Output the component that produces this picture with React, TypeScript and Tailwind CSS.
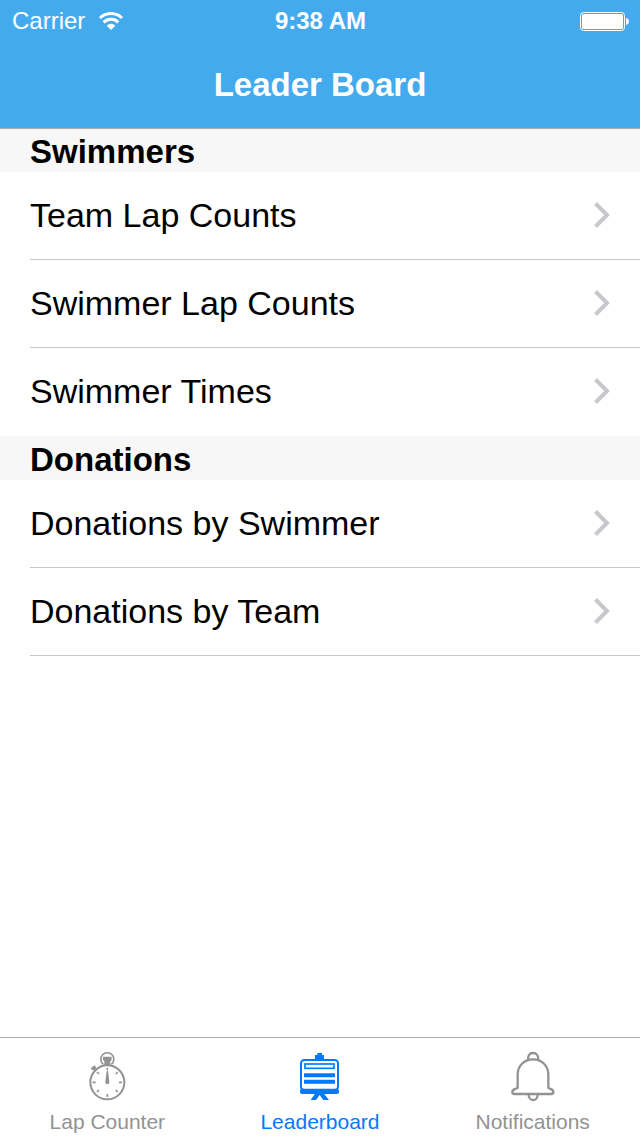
import { useState } from "react";

interface Section {
  title: string;
  items: string[];
}

const SECTIONS: Section[] = [
  { title: "Swimmers", items: ["Team Lap Counts", "Swimmer Lap Counts", "Swimmer Times"] },
  { title: "Donations", items: ["Donations by Swimmer", "Donations by Team"] },
];

const TABS = [
  { id: "laps", label: "Lap Counter", Icon: StopwatchIcon },
  { id: "leaderboard", label: "Leaderboard", Icon: BoardIcon },
  { id: "notifications", label: "Notifications", Icon: BellIcon },
];

function WifiIcon() {
  return (
    <svg className="w-6 h-[18px]" viewBox="0 0 72 54" fill="none" stroke="currentColor" strokeWidth="9" aria-hidden="true">
      <path d="M3 18 A47 47 0 0 1 69 18" />
      <path d="M14 31 A31 31 0 0 1 58 31" />
      <path d="M36 54 L23 41 A18 18 0 0 1 49 41 Z" fill="currentColor" stroke="none" />
    </svg>
  );
}

function BatteryIcon() {
  return (
    <svg className="w-[49px] h-[19px]" viewBox="0 0 49 19" fill="none" aria-hidden="true">
      <rect x="0.5" y="0.5" width="44" height="18" rx="3" stroke="currentColor" />
      <rect x="2" y="2" width="41" height="15" rx="1.5" fill="currentColor" />
      <path d="M46 6 C48 6.5 49 8 49 9.5 S48 12.5 46 13 Z" fill="currentColor" />
    </svg>
  );
}

function ChevronIcon() {
  return (
    <svg className="w-4 h-[26px] text-[#c7c7cc]" viewBox="0 0 16 26" fill="none" stroke="currentColor" strokeWidth="4" aria-hidden="true">
      <path d="M1.5 1.5 L13 13 L1.5 24.5" />
    </svg>
  );
}

function StopwatchIcon() {
  return (
    <svg className="size-[52px]" viewBox="32 48 156 156" fill="none" stroke="currentColor" aria-hidden="true">
      <circle cx="111" cy="142" r="51" strokeWidth="6" />
      <path d="M99 88 A19.500 19.500 0 1 1 123 88" strokeWidth="5" />
      <path d="M98 65 H124 V75 L120 79 V91 H102 V79 L98 75 Z" fill="currentColor" stroke="none" />
      <path d="M68 97 L78 107" strokeWidth="7" />
      <path d="M64 103 L75 94" strokeWidth="9" />
      <path
        d="M111 98 V106 M111 177 V186 M67 142 H76 M146 142 H155 M80 111 L86 117 M142 111 L136 117 M80 171 L86 165 M142 171 L136 165"
        strokeWidth="5"
      />
      <path d="M109 108 H113 L117 141 Q117 148 111 148 Q105 148 105 141 Z" fill="currentColor" stroke="none" />
    </svg>
  );
}

function BoardIcon() {
  return (
    <svg className="size-[52px]" viewBox="36 48 156 156" fill="none" stroke="currentColor" aria-hidden="true">
      <path d="M99 74 V60 H106 V54 H120 V60 H126 V74 Z" fill="currentColor" stroke="none" />
      <rect x="57" y="75" width="111" height="90" rx="10" strokeWidth="6" />
      <rect x="69" y="87" width="87" height="13" strokeWidth="5" />
      <path d="M66 121 H159 M66 140 H159" strokeWidth="12" />
      <rect x="54" y="161" width="117" height="16" rx="6" fill="currentColor" stroke="none" />
      <path d="M99 176 H126 L141 195 H124 L113 180 L102 195 H86 Z" fill="currentColor" stroke="none" />
    </svg>
  );
}

function BellIcon() {
  return (
    <svg className="size-[52px]" viewBox="35 48 156 156" fill="none" stroke="currentColor" strokeWidth="7" strokeLinejoin="round" aria-hidden="true">
      <path d="M67 158 V119 C67 91 88 73 113 73 C138 73 159 91 159 119 V158 C159 162 174 160 174 171 Q174 177 168 177 H57 Q51 177 51 171 C51 160 67 162 67 158 Z" />
      <path d="M99 75 C96 62 103 54 113 54 C123 54 131 62 128 75" />
      <path d="M100 179 C100 189 106 195 113 195 C120 195 127 189 127 179" />
    </svg>
  );
}

export default function App() {
  const [activeTab, setActiveTab] = useState("leaderboard");

  return (
    <div className="min-h-screen flex flex-col bg-white text-black font-['Liberation_Sans',Arial,sans-serif]">
      <header className="relative bg-[#44aaee] text-white shadow-[0_1px_0_#a8acb0]">
        {/* Status bar */}
        <div className="h-10 grid grid-cols-3 pl-3 pr-[11px] text-2xl leading-[42px]">
          <div className="flex items-center gap-[14px]">
            <span>Carrier</span>
            <WifiIcon />
          </div>
          <div className="text-center font-bold">9:38 AM</div>
          <div className="flex items-center justify-end">
            <BatteryIcon />
          </div>
        </div>
        <h1 className="h-22 text-center text-[33px] leading-[90px] font-bold">Leader Board</h1>
      </header>

      <main className="flex-1">
        {SECTIONS.map((section, index) => (
          <section key={section.title}>
            <h2 className="h-11 px-[30px] bg-[#f7f7f7] text-[33px] leading-[48px] font-bold">{section.title}</h2>
            <ul
              className={
                index === SECTIONS.length - 1
                  ? "pl-[30px] *:border-b *:border-[#c8c7cc]"
                  : "pl-[30px] *:border-b *:border-[#c8c7cc] *:last:border-transparent"
              }
            >
              {section.items.map((item) => (
                <li key={item}>
                  <a href="#" className="h-[87px] pr-[30px] pb-0.5 flex items-center justify-between text-[34px] leading-10">
                    {item}
                    <ChevronIcon />
                  </a>
                </li>
              ))}
            </ul>
          </section>
        ))}
      </main>

      {/* Tab bar */}
      <nav className="grid grid-cols-3 px-px border-t border-[#b2b2b2] bg-white">
        {TABS.map(({ id, label, Icon }) => (
          <button
            key={id}
            type="button"
            onClick={() => setActiveTab(id)}
            className={`flex flex-col items-center gap-[7px] pt-[13px] pb-[2px] text-[21px] leading-6 ${
              activeTab === id ? "text-[#007aff]" : "text-[#929292]"
            }`}
          >
            <Icon />
            {label}
          </button>
        ))}
      </nav>
    </div>
  );
}
